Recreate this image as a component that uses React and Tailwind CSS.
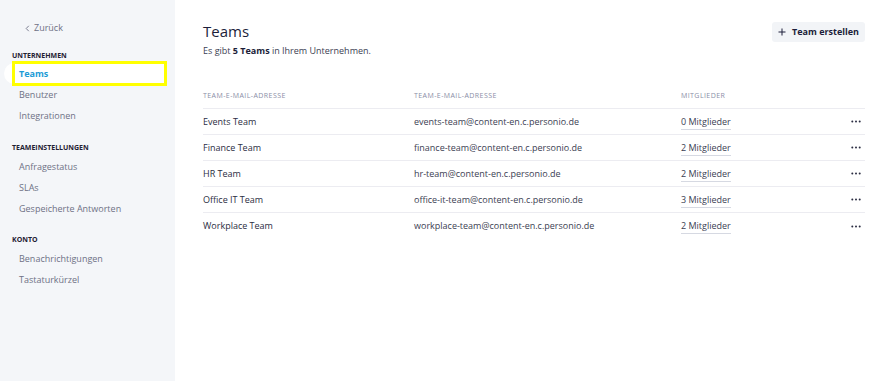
const teams = [
  { name: "Events Team", email: "events-team@content-en.c.personio.de", members: 0 },
  { name: "Finance Team", email: "finance-team@content-en.c.personio.de", members: 2 },
  { name: "HR Team", email: "hr-team@content-en.c.personio.de", members: 2 },
  { name: "Office IT Team", email: "office-it-team@content-en.c.personio.de", members: 3 },
  { name: "Workplace Team", email: "workplace-team@content-en.c.personio.de", members: 2 },
];

const sections = [
  { title: "UNTERNEHMEN", items: ["Teams", "Benutzer", "Integrationen"], mt: "mt-[17px]", mb: "mb-[2px]" },
  { title: "TEAMEINSTELLUNGEN", items: ["Anfragestatus", "SLAs", "Gespeicherte Antworten"], mt: "mt-[17px]", mb: "mb-[3px]" },
  { title: "KONTO", items: ["Benachrichtigungen", "Tastaturkürzel"], mt: "mt-[16px]", mb: "mb-[3px]" },
];

const Dots = () => (
  <svg width="10" height="3" viewBox="0 0 10 3">
    <circle cx="1.3" cy="1.5" r="1" fill="#2b2d42" />
    <circle cx="5" cy="1.5" r="1" fill="#2b2d42" />
    <circle cx="8.7" cy="1.5" r="1" fill="#2b2d42" />
  </svg>
);

const Sidebar = () => (
  <aside className="w-[175px] shrink-0 bg-[#f4f6f9] pt-[22px] min-h-[381px]">
    <div className="flex items-center h-[12px] pl-[25px] text-[9px] text-[#6e7185]">
      <svg width="5" height="7" viewBox="0 0 5 7" className="mr-[4px]">
        <path d="M3.8 0.8 L1.2 3.5 L3.8 6.2" fill="none" stroke="#6e7185" strokeWidth="0.9" />
      </svg>
      Zurück
    </div>
    {sections.map((s) => (
      <div key={s.title} className={s.mt}>
        <div className={`h-[10px] leading-[10px] pl-[12px] text-[7px] font-bold text-[#1f2133] ${s.mb}`}>
          {s.title}
        </div>
        {s.items.map((item) =>
          item === "Teams" ? (
            <div key={item} className="relative h-[21px]">
              <div className="absolute left-[4px] right-[10px] top-0 bottom-0 bg-white rounded-l-full" />
              <div className="absolute left-[12px] right-[8px] top-[-2px] bottom-[-2px] border-[3px] border-[#ffff00]" />
              <div className="relative h-[21px] leading-[21px] pl-[19px] text-[9px] font-bold text-[#1d9bd6]">
                {item}
              </div>
            </div>
          ) : (
            <div key={item} className="h-[21px] leading-[21px] pl-[19px] text-[9px] text-[#6e7185]">
              {item}
            </div>
          )
        )}
      </div>
    ))}
  </aside>
);

export default function App() {
  return (
    <div className="flex w-[890px] h-[381px] overflow-hidden bg-white font-['Open_Sans',sans-serif]">
      <Sidebar />
      <main className="flex-1 pt-[21px] pl-[28px] pr-[25px]">
        <div className="flex justify-between items-start">
          <div>
            <h1 className="text-[15px] leading-[20px] text-[#1c1e3a]">Teams</h1>
            <p className="mt-[4px] text-[9px] leading-[12px] text-[#3b3e52]">
              Es gibt <span className="font-bold text-[#1c1e3a]">5 Teams</span> in Ihrem Unternehmen.
            </p>
          </div>
          <button className="mt-[1px] h-[20px] w-[93px] flex items-center justify-center gap-[6px] bg-[#f2f4f7] rounded-[3px] text-[9px] font-bold text-[#1c1e3a]">
            <svg width="8" height="8" viewBox="0 0 8 8">
              <path d="M4 0.5 V7.5 M0.5 4 H7.5" stroke="#1c1e3a" strokeWidth="1" />
            </svg>
            Team erstellen
          </button>
        </div>

        <div className="mt-[28px]">
          <div className="grid grid-cols-[211px_267px_1fr_auto] items-center h-[24px] border-b border-[#ececf1] text-[7px] tracking-[0.06em] text-[#8a8ea6]">
            <div>TEAM-E-MAIL-ADRESSE</div>
            <div>TEAM-E-MAIL-ADRESSE</div>
            <div>MITGLIEDER</div>
            <div />
          </div>
          {teams.map((t, i) => (
            <div
              key={t.name}
              className={`grid grid-cols-[211px_267px_1fr_auto] items-center h-[26px] text-[9px] text-[#3b3e52] ${
                i < teams.length - 1 ? "border-b border-[#ececf1]" : ""
              }`}
            >
              <div className="text-[#2b2d42]">{t.name}</div>
              <div>{t.email}</div>
              <div>
                <span className="border-b border-[#d6d9e2] pb-[1px]">{t.members} Mitglieder</span>
              </div>
              <div className="pr-[4px] flex items-center">
                <Dots />
              </div>
            </div>
          ))}
        </div>
      </main>
    </div>
  );
}
